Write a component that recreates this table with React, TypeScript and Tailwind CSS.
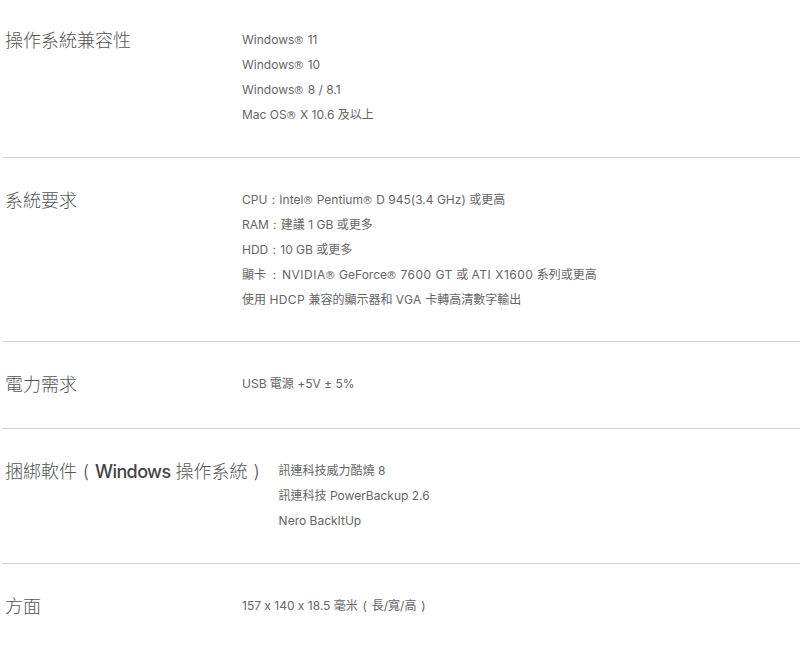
import React from "react";

type Row = { title: React.ReactNode; values: React.ReactNode[]; pad: string };

const P = ({ c }: { c: string }) => (
  <span className="inline-block w-[1em] text-center">{c}</span>
);

const R = () => (
  <span
    className="text-[11px] leading-none ml-[-1px]"
    style={{ fontFamily: '"DejaVu Sans", sans-serif' }}
  >
    ®
  </span>
);

const C = ({ wide }: { wide?: boolean }) => (
  <span className={`inline-block text-center ${wide ? "w-[15px] ml-[1px]" : "w-[12px]"}`}>:</span>
);

const rows: Row[] = [
  {
    pad: "pt-[27px] pb-[30px]",
    title: "操作系統兼容性",
    values: [
      <>Windows<R /> 11</>,
      <>Windows<R /> 10</>,
      <>Windows<R /> 8 / 8.1</>,
      <>Mac OS<R /> X 10.6 及以上</>,
    ],
  },
  {
    pad: "pt-[29px] pb-[29px]",
    title: "系統要求",
    values: [
      <>CPU<C />Intel<R /> Pentium<R /> D 945(3.4 GHz) 或更高</>,
      <>RAM<C />建議 1 GB 或更多</>,
      <>HDD<C />10 GB 或更多</>,
      <>
        顯卡<C wide />
        <span className="tracking-[0.5px]">NVIDIA</span><R /> GeForce<R />{" "}
        <span className="tracking-[0.5px]">7600 GT</span> 或{" "}
        <span className="tracking-[0.5px]">ATI X1600</span> 系列或更高
      </>,
      <>使用 <span className="tracking-[0.4px]">HDCP</span> 兼容的顯示器和 <span className="tracking-[0.4px]">VGA</span> 卡轉高清數字輸出</>,
    ],
  },
  { pad: "pt-[29px] pb-[31px]", title: "電力需求", values: ["USB 電源 +5V ± 5%"] },
  {
    pad: "pt-[29px] pb-[30px]",
    title: (
      <>
        捆綁軟件
        <P c="(" />
        <span className="font-medium text-[#444] tracking-[-0.6px]">Windows</span> 操作系統
        <P c=")" />
      </>
    ),
    values: ["訊連科技威力酷燒 8", "訊連科技 PowerBackup 2.6", "Nero BackItUp"],
  },
  {
    pad: "pt-[29px] pb-[30px]",
    title: "方面",
    values: [
      <>
        157 x 140 x 18.5 毫米<span className="inline-block w-[14px] text-center">(</span>長/寬/高
        <span className="inline-block w-[14px] text-center">)</span>
      </>,
    ],
  },
];

export default function App() {
  return (
    <div
      className="w-[800px] h-[646px] overflow-hidden bg-white pl-[2px] [font-feature-settings:'calt'_0]"
      style={{ fontFamily: '"Inter", "Noto Sans CJK TC", sans-serif' }}
    >
      {rows.map((r, i) => (
        <div
          key={i}
          className={`flex ${r.pad} ${i < rows.length - 1 ? "border-b border-[#d4d4d4]" : ""}`}
        >
          <div className="min-w-[227px] h-[26px] pl-[3px] mr-[13px] pt-[1px] text-[18px] leading-[26px] text-[#555] font-light whitespace-nowrap">
            {r.title}
          </div>
          <div className="flex flex-col">
            {r.values.map((v, j) => (
              <div
                key={j}
                className="h-[25px] overflow-visible text-[12px] leading-[25px] text-[#666] whitespace-nowrap"
              >
                {v}
              </div>
            ))}
          </div>
        </div>
      ))}
    </div>
  );
}
